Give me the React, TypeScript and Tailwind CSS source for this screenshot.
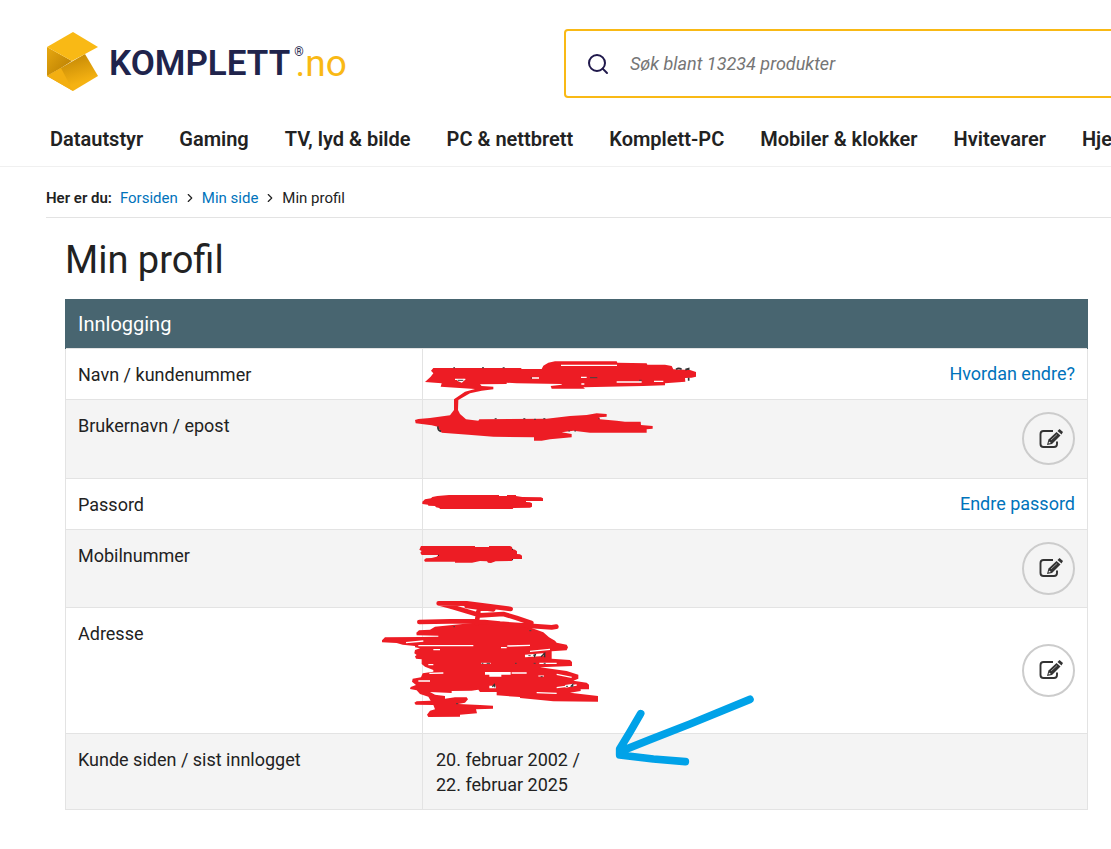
import React from 'react'
import { Search, ChevronRight } from 'lucide-react'

interface ProfileRow {
  label: string
  value?: React.ReactNode
  link?: string
  editLabel?: string
  className: string
}

const categories = [
  'Datautstyr',
  'Gaming',
  'TV, lyd & bilde',
  'PC & nettbrett',
  'Komplett-PC',
  'Mobiler & klokker',
  'Hvitevarer',
  'Hjem & fritid',
]

const rows: ProfileRow[] = [
  { label: 'Navn / kundenummer', link: 'Hvordan endre?', className: 'h-[51px] bg-white' },
  { label: 'Brukernavn / epost', editLabel: 'Endre epost', className: 'h-[79px] bg-[#f4f4f4]' },
  { label: 'Passord', link: 'Endre passord', className: 'h-[51px] bg-white' },
  { label: 'Mobilnummer', editLabel: 'Endre mobilnummer', className: 'h-[78px] bg-[#f4f4f4]' },
  { label: 'Adresse', editLabel: 'Endre adresse', className: 'h-[126px] bg-white' },
  {
    label: 'Kunde siden / sist innlogget',
    value: <>20. februar 2002 /<br />22. februar 2025</>,
    className: 'h-[76px] bg-[#f4f4f4]',
  },
]

const Logo = () => (
  <a href="#" aria-label="Komplett.no" className="flex items-start">
    <svg width="52" height="60" viewBox="0 0 52 60" className="shrink-0">
      <defs>
        <linearGradient id="left" x1="0" y1="0.2" x2="0.6" y2="0.8">
          <stop offset="0" stopColor="#e3a40e" />
          <stop offset="1" stopColor="#c48805" />
        </linearGradient>
        <linearGradient id="fold" x1="0.3" y1="0.1" x2="0.6" y2="0.8">
          <stop offset="0" stopColor="#c48805" />
          <stop offset="1" stopColor="#f5b212" />
        </linearGradient>
      </defs>
      <path d="M0 15 25 29 14 36 0 44Z" fill="url(#left)" />
      <path d="M0 44 38 22 51 44 26 59Z" fill="url(#fold)" />
      <path d="M0 44 14 36 26 59Z" fill="#f3af11" />
      <path d="M0 15 26 0 51 15 25 29Z" fill="#f9b915" />
    </svg>
    <span className="ml-[10px] flex text-[35px] leading-[60px] text-[#20244c]">
      <span className="pt-[2px] font-semibold">KOMPLETT</span>
      <span className="ml-1 mt-3 text-xs leading-4">®</span>
      <span className="-ml-2 pt-[2px] text-[37px] text-[#f9b915]">.no</span>
    </span>
  </a>
)

const EditIcon = () => (
  <svg width="24" height="20" viewBox="0 0 24 20" fill="none">
    <path d="M14 2H4.500Q1.500 2 1.500 5V15Q1.500 18 4.500 18H15Q18 18 18 15V12.500" stroke="#333" strokeWidth="1.900" />
    <path d="M8 16 9.500 10.500 17.500 3 21.500 6.500 13 15Z" fill="#333" />
    <path d="M18.500 2 20.500 0 24 3 22.500 5.500Z" fill="#333" />
    <path d="M12 11 18 5.500" stroke="#999" />
    <path d="M10 12.500 12 14 9.500 14.500Z" fill="#f4f4f4" />
  </svg>
)

// pen scribbles over the private values, and the arrow at the dates
const Markings = () => (
  <svg
    width="400"
    height="430"
    viewBox="0 0 1200 1290"
    className="pointer-events-none absolute top-[51px] left-[305px]"
    fill="none"
    aria-hidden="true"
  >
    {/* name and e-mail */}
    <path
      fill="#ed1c24"
      d="M190 54H453L455 57H515L520 47 535 38 555 34H740L742 38 830 40 832 44H885L905 48 910 58 960 60 978 66V80L965 83 945 84 946 95 885 100V106L820 108 640 112 645 116H545L542 108 575 104V102L440 100 410 98V102L330 103 335 108 370 110V118L335 122 300 130 265 150 264 180 270 192 288 208 325 212 328 208 530 206 600 198 650 195 680 190 710 192V200L688 202 690 208 740 212 765 215H812L813 225 848 228V236L830 238V248H660L610 242 575 247 605 252V262L540 268 515 272H492V262L370 260 295 254 215 248 203 230 185 226 137 220 135 210 145 207 180 204 240 196 252 180V148L285 125 315 117 212 110 215 100 165 96 182 80 190 70 183 62Z"
    />
    <path stroke="#fff" strokeWidth="4" d="M573 46H741M486 84H507M740 96H815M852 94H880M255 88H286M634 102H643M633 82H650" />
    <path stroke="#fff" strokeWidth="5" d="M262 90 275 95 283 88" />
    <path stroke="#444" strokeWidth="3" d="M263 91H280M660 83H682M250 53H255M336 53H342M398 53H404M807 91H815M482 84H486M374 206H380M460 206H466M520 206H526M492 208H498M685 206H688M595 243H600M613 243H618" />
    <path stroke="#333" strokeWidth="5" d="M918 58Q926 52 935 58M946 59 956 56V60M956 83V92M204 229Q202 241 213 244" />

    {/* password and mobile number */}
    <g fill="#ed1c24" transform="translate(0 390)">
      <path d="M157 65 165 58 183 55 187 51 202 48 237 45H387V48H411V45H438V48L457 51 513 52 519 55V63H468V66L480 67 486 70V80L480 83 430 84 428 87H210L208 84 198 82 195 78 175 77 174 74 157 72Z" />
      <path d="M153 198H315V201H357V198H420L426 201 427 207 435 209 441 214V222L450 223 456 227V237H430L425 243 377 244 363 249 354 248 351 244 330 243 306 248H255V245H165L162 240 168 235 185 234 200 230 205 225H155L151 218 155 213 148 209Z" />
    </g>
    <path stroke="#222" strokeWidth="3" d="M204 616H207M426 598H429M426 629H429" />

    {/* address */}
    <g transform="translate(0 720)">
      <path
        fill="#ed1c24"
        d="M195 110 315 98 400 96 460 105 520 127 537 142 555 152 560 158 590 164 594 172 590 181 545 184V206L600 210 606 216V228L510 232 590 243 625 254V266L610 272 650 278 657 284V298H632V303L600 308 684 318V335L550 334 450 324V321L380 316V306H330L325 299 305 302 245 303V309L180 306 195 314 225 318V326L255 322 290 322 294 328 285 338 265 342 330 345 369 347V356L318 358 321 370 270 374V380L175 381 171 374 180 362 195 358 190 345 137 344 133 338 140 334 182 332 175 320 150 312 140 301 120 297 122 291 138 285 126 275 128 266 153 262 158 250 190 245V240L165 230 155 222V208L138 206 135 199 140 195 133 190 135 180 150 175 135 172V168L98 164 80 159 36 157V151L45 142 155 141 205 140V137L140 136 139 128 147 121 180 119Z"
      />
      <path
        stroke="#ed1c24"
        strokeWidth="14"
        strokeLinecap="round"
        strokeLinejoin="round"
        d="M290 41 206 40 250 52 330 76 400 72 440 84 484 99M206 40 290 40 422 57M290 48 370 58M325 65 320 100M148 96 240 94 320 94 390 101 470 107 545 112 559 110"
      />
      <path stroke="#fff" strokeWidth="4" d="M108 158 160 153M145 167H310M393 173H410M480 184 540 178M190 179H210M175 224H190M508 220H560M178 250 220 249M145 273H180M500 308 560 310M412 168 480 166M425 249H470M560 253 605 262M560 293 620 285" />
      <path stroke="#fff" strokeWidth="8" d="M345 250H422M358 256H394M465 198 520 194M358 291H378M586 289 610 285" />
      <path stroke="#fff" strokeWidth="3" d="M333 220H362M505 258H522" />
      <path stroke="#444" strokeWidth="3" d="M335 220H340M350 220H360M435 220H440M491 220H497M521 220H527M250 110H255M478 122H484M512 260H518M258 341H264M475 197H482M588 289H594" />
      <path stroke="#333" strokeWidth="4" d="M490 196 496 194 493 202M513 200 524 190V202M367 290 373 284 375 292M602 290 608 284V290" />
    </g>

    {/* arrow */}
    <path
      stroke="#00a2e8"
      strokeWidth="23"
      strokeLinecap="round"
      strokeLinejoin="round"
      d="M1140 1048 960 1122 840 1169 750 1205M812 1091 780 1146 749 1197V1215L850 1227 946 1235"
    />
  </svg>
)

const App: React.FC = () => {
  return (
    <div className="overflow-hidden bg-white font-['Roboto',sans-serif] text-[#222]">
      <header className="border-b border-[#f0f0f0]">
        <div className="flex items-start pt-[29px] pl-[47px]">
          <div className="w-[516px] shrink-0 pt-[3px]">
            <Logo />
          </div>
          <label className="-mr-2 ml-px flex h-[69px] grow items-center rounded border-2 border-[#f9b915] pl-5">
            <Search size={24} color="#20194c" strokeWidth={2} />
            <input
              type="search"
              aria-label="Søk"
              placeholder="Søk blant 13234 produkter"
              className="ml-5 grow text-lg italic outline-none placeholder:text-[#757575]"
            />
          </label>
        </div>
        <nav className="flex gap-9 pt-[27px] pb-[13px] pl-[50px] text-xl leading-7 font-semibold whitespace-nowrap">
          {categories.map((category) => (
            <a key={category} href="#">{category}</a>
          ))}
        </nav>
      </header>

      <nav className="ml-[46px] flex h-[51px] items-center border-b border-[#e3e3e3] pt-3 text-[15px]">
        <span className="mr-2 font-semibold">Her er du:</span>
        <a href="#" className="text-[#0073bb]">Forsiden</a>
        <ChevronRight size={14} className="mx-[5px]" />
        <a href="#" className="text-[#0073bb]">Min side</a>
        <ChevronRight size={14} className="mx-[5px]" />
        <span>Min profil</span>
      </nav>

      <main className="mr-[23px] ml-[65px]">
        <h1 className="pt-[18px] pb-[15px] text-[38px] leading-[48px]">Min profil</h1>
        <div className="relative">
          <table className="w-full border-collapse text-lg leading-[25px]">
            <thead>
              <tr className="h-[49px] border-x border-[#486570] bg-[#486570] text-white">
                <th colSpan={3} className="px-3 pt-[2px] text-left text-xl font-normal">Innlogging</th>
              </tr>
            </thead>
            <tbody>
              {rows.map((row) => (
                <tr key={row.label} className={`border border-[#e3e3e3] ${row.className}`}>
                  <th scope="row" className="w-[357px] border-r border-[#e3e3e3] px-3 pt-[13px] text-left align-top font-normal">
                    {row.label}
                  </th>
                  <td className="px-[13px] pt-[13px] align-top">{row.value}</td>
                  <td className="px-3 text-right">
                    {row.link && <a href="#" className="text-[#0073bb]">{row.link}</a>}
                    {row.editLabel && (
                      <button
                        aria-label={row.editLabel}
                        className="inline-flex size-[53px] items-center justify-center rounded-full border-2 border-[#ccc] pl-1 align-middle"
                      >
                        <EditIcon />
                      </button>
                    )}
                  </td>
                </tr>
              ))}
            </tbody>
          </table>
          <Markings />
        </div>
      </main>
    </div>
  )
}

export default App
